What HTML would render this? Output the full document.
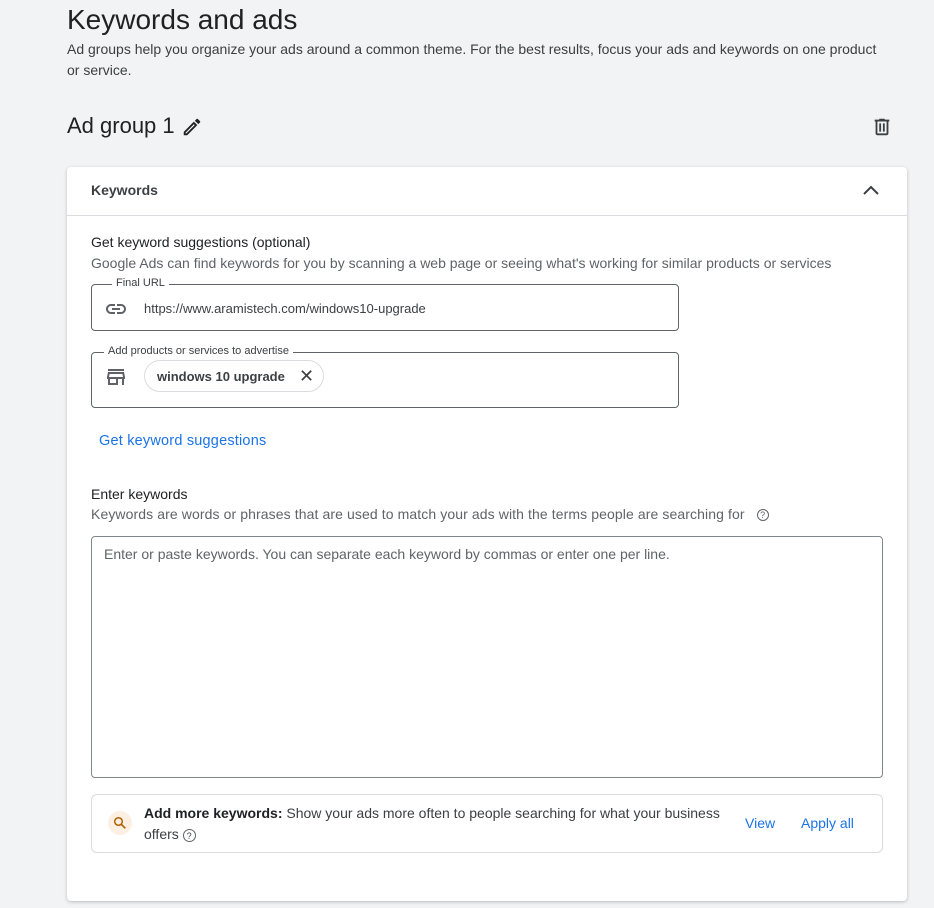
<!DOCTYPE html>
<html><head><style>
*{box-sizing:border-box;margin:0;padding:0}
body{width:934px;height:908px;background:#f1f3f4;font-family:"Liberation Sans",sans-serif;color:#202124;position:relative;overflow:hidden}
.a{position:absolute;white-space:nowrap}
.card{position:absolute;left:67px;top:167px;width:840px;height:734px;background:#fff;border-radius:4px;box-shadow:0 1px 3px rgba(60,64,67,.3)}
.box{position:absolute;border:1px solid #5f6368;border-radius:4px}
.lbl{position:absolute;top:-8px;background:#fff;padding:0 4px;font-size:11px;color:#3c4043}
</style></head><body>
<div class="a" style="left:67px;top:4px;font-size:28px;color:#202124">Keywords and ads</div>
<div class="a" style="left:67px;top:39px;font-size:14px;line-height:21px;color:#3c4043;white-space:normal;width:815px">Ad groups help you organize your ads around a common theme. For the best results, focus your ads and keywords on one product or service.</div>
<div class="a" style="left:67px;top:113px;font-size:22px">Ad group 1</div>
<svg class="a" style="left:181px;top:116px" width="22" height="22" viewBox="0 0 24 24"><path d="M3 17.25V21h3.75L17.81 9.940l-3.75-3.75L3 17.25zM5.92 19H5v-.92l9.06-9.06.92.92L5.92 19zM20.71 5.630l-2.34-2.34a1 1 0 0 0-1.41 0l-1.83 1.83 3.75 3.75 1.83-1.83a1 1 0 0 0 0-1.41z" fill="#202124"/></svg>
<svg class="a" style="left:871px;top:116px" width="22" height="22" viewBox="0 0 24 24"><path d="M15 4V3H9v1H4v2h1v13c0 1.1.9 2 2 2h10c1.1 0 2-.9 2-2V6h1V4h-5zm2 15H7V6h10v13zM9 8h2v9H9zm4 0h2v9h-2z" fill="#3c4043"/></svg>
<div class="card">
 <div class="a" style="left:24px;top:15px;font-size:14px;font-weight:bold;color:#3c4043">Keywords</div>
 <svg class="a" style="left:792px;top:12px" width="24" height="24" viewBox="0 0 24 24"><path d="M5 15l7-7 7 7" fill="none" stroke="#3c4043" stroke-width="2"/></svg>
 <div class="a" style="left:0;top:48px;width:840px;height:1px;background:#dadce0"></div>
 <div class="a" style="left:24px;top:67px;font-size:14px;color:#202124">Get keyword suggestions (optional)</div>
 <div class="a" style="left:24px;top:88px;font-size:14px;color:#5f6368">Google Ads can find keywords for you by scanning a web page or seeing what's working for similar products or services</div>
 <div class="box" style="left:24px;top:117px;width:588px;height:47px">
  <div class="lbl" style="left:20px">Final URL</div>
  <svg class="a" style="left:12px;top:12px" width="24" height="24" viewBox="0 0 24 24"><path d="M17 7h-4v2h4c1.65 0 3 1.35 3 3s-1.35 3-3 3h-4v2h4c2.76 0 5-2.24 5-5s-2.24-5-5-5zm-6 8H7c-1.65 0-3-1.35-3-3s1.35-3 3-3h4V7H7c-2.76 0-5 2.24-5 5s2.24 5 5 5h4v-2zm-3-4h8v2H8z" fill="#5f6368"/></svg>
  <div class="a" style="left:52px;top:16px;font-size:13px;color:#3c4043">https://www.aramistech.com/windows10-upgrade</div>
 </div>
 <div class="box" style="left:24px;top:185px;width:588px;height:56px">
  <div class="lbl" style="left:12px">Add products or services to advertise</div>
  <svg class="a" style="left:12px;top:12px" width="24" height="24" viewBox="0 0 24 24"><path d="M4 4h16v2H4zm16 3H4l-1 5v2h1v6h10v-6h4v6h2v-6h1v-2l-1-5zM12 18H6v-4h6v4zm-7-6l.6-3h12.8l.6 3H5z" fill="#5f6368"/></svg>
  <div class="a" style="left:52px;top:7px;width:180px;height:32px;border:1px solid #dadce0;border-radius:16px;font-size:13px;font-weight:bold;color:#3c4043;padding:8px 0 0 12px">windows 10 upgrade<span style="position:absolute;left:154px;top:5px;font-weight:normal;font-size:18px">✕</span></div>
 </div>
 <div class="a" style="left:32px;top:266px;font-size:14.5px;letter-spacing:.2px;color:#1a73e8">Get keyword suggestions</div>
 <div class="a" style="left:24px;top:319px;font-size:14px;color:#202124">Enter keywords</div>
 <div class="a" style="left:24px;top:339px;font-size:14px;letter-spacing:.1px;color:#5f6368">Keywords are words or phrases that are used to match your ads with the terms people are searching for <span style="display:inline-block;width:12px;height:12px;border:1px solid #5f6368;border-radius:50%;font-size:9px;text-align:center;line-height:11px;vertical-align:1px;margin-left:8px">?</span></div>
 <div class="box" style="left:24px;top:369px;width:792px;height:242px;border-color:#80868b">
  <div class="a" style="left:12px;top:9px;font-size:14px;color:#5f6368">Enter or paste keywords. You can separate each keyword by commas or enter one per line.</div>
 </div>
 <div class="a" style="left:24px;top:627px;width:792px;height:59px;border:1px solid #dadce0;border-radius:6px">
  <div class="a" style="left:16px;top:16px;width:24px;height:24px;border-radius:50%;background:#feefe3"></div>
  <svg class="a" style="left:21px;top:21px" width="14" height="14" viewBox="0 0 14 14"><circle cx="5.5" cy="5.5" r="3.8" fill="none" stroke="#b06000" stroke-width="1.5"/><path d="M8.3 8.3l4 4" stroke="#b06000" stroke-width="1.6"/></svg>
  <div class="a" style="left:52px;top:8px;font-size:14px;line-height:21px;color:#3c4043;white-space:normal;width:600px"><b style="color:#202124">Add more keywords:</b> Show your ads more often to people searching for what your business offers <span style="display:inline-block;width:13px;height:13px;border:1px solid #5f6368;border-radius:50%;font-size:9px;text-align:center;line-height:12px">?</span></div>
  <div class="a" style="left:653px;top:20px;font-size:14px;color:#1a73e8">View</div>
  <div class="a" style="left:709px;top:20px;font-size:14px;color:#1a73e8">Apply all</div>
 </div>
</div>
</body></html>
